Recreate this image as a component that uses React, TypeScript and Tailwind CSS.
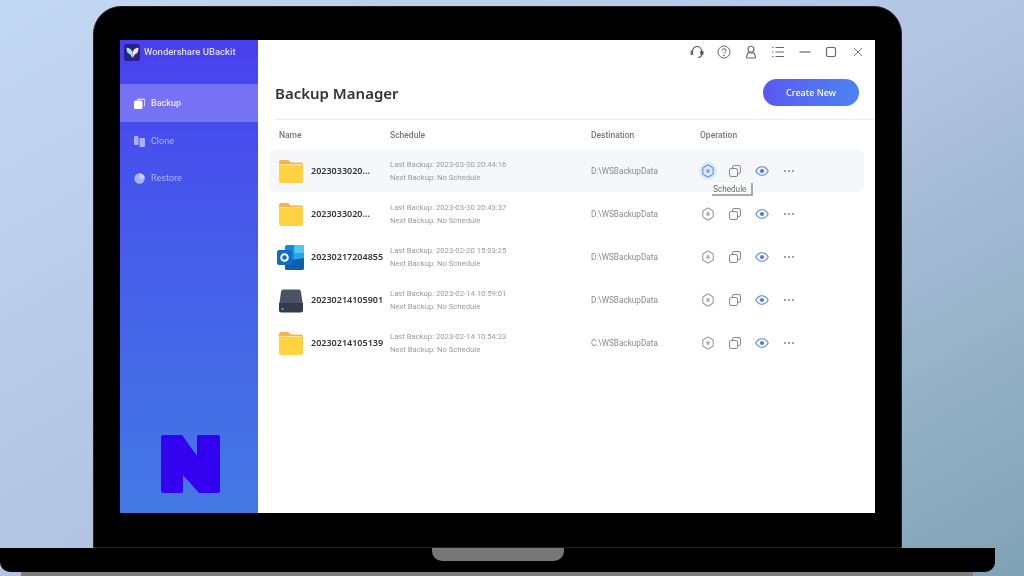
import React from "react";

const rows = [
  { icon: "folder", name: "2023033020...", last: "2023-03-30 20:44:16", dest: "D:\\WSBackupData", active: true },
  { icon: "folder", name: "2023033020...", last: "2023-03-30 20:43:37", dest: "D:\\WSBackupData" },
  { icon: "outlook", name: "20230217204855", last: "2023-02-20 15:03:25", dest: "D:\\WSBackupData" },
  { icon: "disk", name: "20230214105901", last: "2023-02-14 10:59:01", dest: "D:\\WSBackupData" },
  { icon: "folder", name: "20230214105139", last: "2023-02-14 10:54:23", dest: "C:\\WSBackupData" },
];

function Folder() {
  return (
    <svg className="shrink-0" width="24" height="23" viewBox="0 0 24 23">
      <path d="M0 2a2 2 0 0 1 2-2h7l3 2.500h10a2 2 0 0 1 2 2V10H0z" fill="#f7b44a" />
      <path d="M0 4.500h22a2 2 0 0 1 2 2V21a2 2 0 0 1-2 2H2a2 2 0 0 1-2-2z" fill="#ffd23f" />
      <path d="M.5 4.500h22.500" stroke="#fff0bd" strokeWidth="0.7" />
    </svg>
  );
}
function Outlook() {
  return (
    <svg className="shrink-0" width="28" height="26" viewBox="0 0 28 26">
      <rect x="8" y="0" width="19" height="25" rx="2" fill="#1a8ad8" />
      <rect x="17" y="0" width="10" height="8" rx="1" fill="#50c8f5" />
      <rect x="17" y="8" width="10" height="8" fill="#28a8ea" />
      <path d="M8 16l19-3v10a2 2 0 0 1-2 2H10a2 2 0 0 1-2-2z" fill="#0f5fb0" />
      <rect x="0" y="5" width="15" height="15" rx="2" fill="#0f6cc8" />
      <circle cx="7.500" cy="12.500" r="3.300" fill="none" stroke="#fff" strokeWidth="1.900" />
    </svg>
  );
}
function Disk() {
  return (
    <svg className="shrink-0" width="24" height="24" viewBox="0 0 24 24">
      <path d="M2 3A2.500 2.500 0 0 1 4.500.5h15A2.500 2.500 0 0 1 22 3l2 14H0z" fill="#4d5364" />
      <path d="M0 14h24v7a2.500 2.500 0 0 1-2.500 2.500h-19A2.500 2.500 0 0 1 0 21z" fill="#353a4c" />
      <circle cx="3.500" cy="20" r="1" fill="#4fd0e8" />
    </svg>
  );
}
function Hex({ on }: { on?: boolean }) {
  const c = on ? "#5b8fe0" : "#9a9a9a";
  return (
    <svg width="14" height="14" viewBox="0 0 14 14" fill="none">
      <path d="M6.200 1.300a1.600 1.600 0 0 1 1.600 0l3.600 2.100a1.600 1.600 0 0 1 .8 1.400v4.400a1.600 1.600 0 0 1-.8 1.400l-3.600 2.100a1.600 1.600 0 0 1-1.600 0l-3.600-2.100a1.600 1.600 0 0 1-.8-1.400V4.800a1.600 1.600 0 0 1 .8-1.400z" stroke={c} strokeWidth="1.100" />
      <circle cx="7" cy="7" r="1.900" fill={c} opacity="0.75" />
    </svg>
  );
}
function Copy() {
  return (
    <svg width="14" height="14" viewBox="0 0 14 14" fill="none" stroke="#8a8a8a" strokeWidth="1">
      <rect x="1.500" y="4.500" width="8" height="8" rx="1.500" />
      <path d="M4.500 4.500V3a1.500 1.500 0 0 1 1.500-1.500h5A1.500 1.500 0 0 1 12.500 3v5A1.500 1.500 0 0 1 11 9.500H9.500" />
    </svg>
  );
}
function Eye() {
  return (
    <svg width="14" height="12" viewBox="0 0 14 12" fill="none">
      <path d="M.8 6C2.300 3.300 4.500 1.800 7 1.800S11.700 3.300 13.200 6C11.700 8.700 9.500 10.200 7 10.200S2.300 8.700.8 6z" stroke="#5b86d6" strokeWidth="1.100" />
      <circle cx="7" cy="6" r="2.100" fill="#4f7bd0" />
    </svg>
  );
}
function Dots() {
  return (
    <svg width="12" height="4" viewBox="0 0 12 4" fill="#777">
      <circle cx="2" cy="2" r="0.900" />
      <circle cx="6" cy="2" r="0.900" />
      <circle cx="10" cy="2" r="0.900" />
    </svg>
  );
}

function TopIcons() {
  return (
    <div className="flex items-center justify-end h-[24px] pr-[10px] gap-[13px]">
      <svg width="14" height="14" viewBox="0 0 14 14" fill="none" stroke="#555" strokeWidth="1.100">
        <path d="M2.500 6.500V6a4.500 4.500 0 0 1 9 0v.5" />
        <path d="M2.500 6H2a1 1 0 0 0-1 1v1.500a1 1 0 0 0 1 1h.5z" />
        <rect x="10.800" y="6" width="2.200" height="3.500" rx="1" fill="#555" />
        <path d="M11.500 9.500c0 2-1.500 3-3.500 3" />
      </svg>
      <svg width="14" height="14" viewBox="0 0 14 14" fill="none" stroke="#666" strokeWidth="1">
        <circle cx="7" cy="7" r="6" />
        <path d="M5.200 5.500A1.900 1.900 0 1 1 7.600 7.400c-.5.200-.6.500-.6 1.100" />
        <circle cx="7" cy="10.300" r=".4" fill="#666" />
      </svg>
      <svg width="14" height="14" viewBox="0 0 14 14" fill="none" stroke="#666" strokeWidth="1.100">
        <circle cx="7" cy="4.200" r="3" />
        <path d="M3.800 8h6.400l1.300 4a1 1 0 0 1-1 1H3.500a1 1 0 0 1-1-1z" />
      </svg>
      <svg width="14" height="14" viewBox="0 0 14 14" fill="none" stroke="#666" strokeWidth="1">
        <path d="M4.500 2.500H13M4.500 7H13M4.500 11.500H13" />
        <path d="M1 2.500h1.500M1 7h1.500M1 11.500h1.500" />
      </svg>
      <svg width="14" height="14" viewBox="0 0 14 14" fill="none" stroke="#666" strokeWidth="1.200">
        <path d="M1.500 7h11" />
      </svg>
      <svg className="ml-[-1px]" width="14" height="14" viewBox="0 0 14 14" fill="none" stroke="#666" strokeWidth="1.200">
        <rect x="2.500" y="2.500" width="9" height="9" rx="1.500" />
      </svg>
      <svg width="14" height="14" viewBox="0 0 14 14" fill="none" stroke="#777" strokeWidth="1">
        <path d="M3 3l8 8M11 3l-8 8" />
      </svg>
    </div>
  );
}

function NavIcon({ kind, on }: { kind: string; on?: boolean }) {
  const c = on ? "#ffffff" : "#a8b4f8";
  if (kind === "backup")
    return (
      <svg width="11" height="11" viewBox="0 0 11 11" fill={c}>
        <path d="M3 1.500A1 1 0 0 1 4 .5h6a1 1 0 0 1 1 1v6a1 1 0 0 1-1 1V3a1 1 0 0 0-1-1H3z" opacity=".7" />
        <rect x="0" y="2.500" width="8.500" height="8.500" rx="1.500" />
      </svg>
    );
  if (kind === "clone")
    return (
      <svg width="11" height="11" viewBox="0 0 11 11" fill={c}>
        <rect x="0" y="0" width="4.500" height="9" rx="1" />
        <rect x="5.500" y="2" width="5.500" height="9" rx="1" />
      </svg>
    );
  return (
    <svg width="11" height="11" viewBox="0 0 11 11" fill={c}>
      <circle cx="5.500" cy="5.500" r="5.200" />
      <path d="M5.500 .3A5.200 5.200 0 0 1 10.700 5.500H5.500z" fill="#c9d1fb" />
    </svg>
  );
}

export default function App() {
  return (
    <div
      className="relative w-[1024px] h-[576px] overflow-hidden bg-gradient-to-br from-[#c3d8f2] via-[#b3c4e2] to-[#7fa3b4] pt-[6px]"
      style={{ fontFamily: '"Noto Sans", "Open Sans", sans-serif' }}
    >
      {/* Bezel */}
      <div className="ml-[93px] w-[809px] h-[542px] bg-black rounded-t-[28px] border border-[#222] pt-[33px] pl-[26px]">
        {/* Screen */}
        <div className="flex w-[755px] h-[473px] bg-white blur-[0.4px]">
          {/* Sidebar */}
          <aside className="w-[138px] shrink-0 flex flex-col bg-gradient-to-b from-[#4840ee] to-[#4479e4]">
            <div className="flex items-center gap-[4px] h-[22px] mt-[1px] pl-[4px]">
              <div className="w-[16px] h-[17px] rounded-[3px] bg-[#2a1f8f] flex items-center justify-center">
                <svg width="13" height="11" viewBox="0 0 13 11">
                  <path d="M6.500 5C5 1.500 2.500.5.500.8c0 3.500 1 6 3.500 6.500L6.500 11z" fill="#9fe3f7" />
                  <path d="M6.500 5C8 1.500 10.500.5 12.500.8c0 3.500-1 6-3.500 6.500L6.500 11z" fill="#fbe6b0" />
                </svg>
              </div>
              <span className="pt-[1px] font-['Roboto'] text-[9.500px] font-medium text-[#dcdcfb] whitespace-nowrap">Wondershare UBackit</span>
            </div>
            <div className="mt-[21px] h-[38px] flex items-center pl-[14px] gap-[6px] bg-[#7672f3]">
              <NavIcon kind="backup" on />
              <span className="pt-[1px] font-['Roboto'] text-[9px] font-medium text-[#e8e8ff]">Backup</span>
            </div>
            <div className="h-[38px] flex items-center pl-[14px] gap-[6px]">
              <NavIcon kind="clone" />
              <span className="pt-[2px] font-['Roboto'] text-[9px] text-[#a8b4f8]">Clone</span>
            </div>
            <div className="h-[37px] flex items-center pl-[14px] gap-[6px]">
              <NavIcon kind="restore" />
              <span className="pt-[1px] font-['Roboto'] text-[9px] text-[#a8b4f8]">Restore</span>
            </div>
            <div className="mt-auto mb-[20px] ml-[41px]">
              <svg width="59" height="58" viewBox="0 0 59 58">
                <path d="M2 0h19l15 21V2a2 2 0 0 1 2-2h19a2 2 0 0 1 2 2v54a2 2 0 0 1-2 2H38L22 40v16a2 2 0 0 1-2 2H2a2 2 0 0 1-2-2V2a2 2 0 0 1 2-2z" fill="#3300f0" />
              </svg>
            </div>
          </aside>

          {/* Main */}
          <main className="relative flex-1 flex flex-col">
            <TopIcons />
            <div className="flex items-center justify-between h-[56px] pl-[17px] pr-[16px] mt-[-1px]">
              <h1 className="text-[15px] font-semibold text-[#333] mt-[5px]">Backup Manager</h1>
              <button className="w-[96px] h-[27px] pt-[2px] rounded-full bg-gradient-to-r from-[#5a58f0] to-[#4a84f4] text-white text-[9px] font-medium mt-[2px]">
                Create New
              </button>
            </div>
            <div className="h-px ml-[17px] bg-[#ececec]" />
            <div className="flex items-center h-[29px] pt-[1px] pl-[21px] font-['Roboto'] text-[8.500px] font-medium text-[#777]">
              <span className="w-[111px]">Name</span>
              <span className="w-[201px]">Schedule</span>
              <span className="w-[109px]">Destination</span>
              <span>Operation</span>
            </div>
            <div className="flex flex-col">
              {rows.map((r, i) => (
                <div
                  key={i}
                  className={`flex items-center h-[43px] ml-[11px] w-[595px] rounded-[8px] ${r.active ? "bg-[#f5f7fa]" : ""}`}
                >
                  <div className="w-[34px] pl-[10px] pt-[2px] flex items-center shrink-0">
                    <div className="w-[24px] flex justify-center">
                      {r.icon === "folder" ? <Folder /> : r.icon === "outlook" ? <Outlook /> : <Disk />}
                    </div>
                  </div>
                  <div className="w-[72px] ml-[8px] mr-[7px] shrink-0 overflow-hidden whitespace-nowrap text-[9px] font-semibold text-[#333]">
                    {r.name}
                  </div>
                  <div className="w-[201px] shrink-0 font-['Roboto'] text-[7.700px] leading-[13px] text-[#9a9a9a] whitespace-nowrap">
                    <div>Last Backup: {r.last}</div>
                    <div>Next Backup: No Schedule</div>
                  </div>
                  <div className="w-[108px] shrink-0 pt-[2px] font-['Roboto'] text-[8.200px] text-[#8a8a8a]">{r.dest}</div>
                  <div className="flex items-center">
                    <div className={`w-[18px] h-[18px] rounded-full flex items-center justify-center ${r.active ? "bg-[#dfe9fb]" : ""}`}>
                      <Hex on={r.active} />
                    </div>
                    <div className="w-[27px] ml-[4px] flex justify-center"><Copy /></div>
                    <div className="w-[27px] flex justify-center"><Eye /></div>
                    <div className="w-[27px] flex justify-center"><Dots /></div>
                  </div>
                </div>
              ))}
            </div>
            {/* Tooltip */}
            <div className="absolute left-[454px] top-[143px] h-[13px] pl-[1px] pr-[5px] bg-white font-['Roboto'] text-[8.200px] leading-[12px] text-[#666] border-r-2 border-b-2 border-[#aaa]">
              Schedule
            </div>
          </main>
        </div>
      </div>

      {/* Base */}
      <div className="relative w-[995px] h-[24px] bg-black rounded-b-[10px] flex justify-center">
        <div className="w-[132px] h-[13px] bg-[#777] rounded-b-[10px] ml-[1px]" />
      </div>
      <div className="ml-[21px] w-[952px] h-[4px] bg-[#7d7d7d]" />
    </div>
  );
}
